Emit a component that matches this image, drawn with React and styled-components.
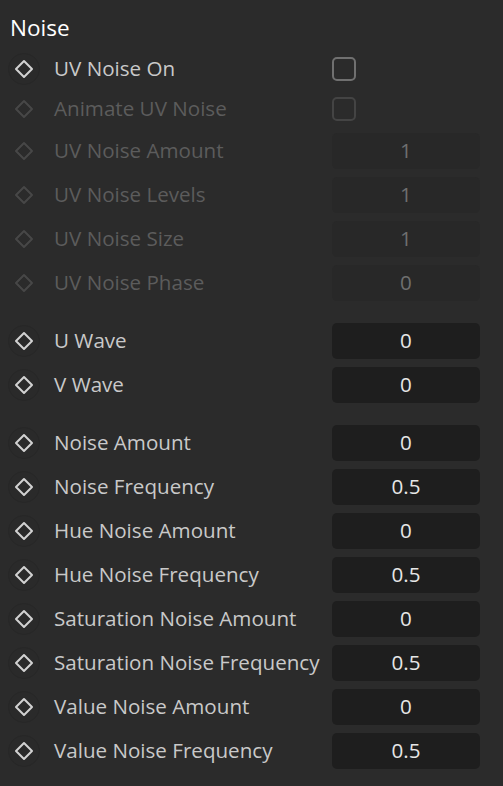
import React from "react";
import styled, { createGlobalStyle } from "styled-components";

const Global = createGlobalStyle`
  html, body { margin: 0; padding: 0; background: #2b2b2b; }
  body { font-family: "Open Sans", "Noto Sans", sans-serif; }
`;

const Panel = styled.div`
  width: 503px;
  min-height: 786px;
  background: #2b2b2b;
  box-sizing: border-box;
  padding: 0 23px 0 8px;
`;

const Title = styled.div`
  height: 49px;
  display: flex;
  align-items: center;
  padding: 6px 0 0 2px;
  box-sizing: border-box;
  color: #ffffff;
  font-size: 22.5px;
`;

const Group = styled.div`
  display: flex;
  flex-direction: column;
  & + & { margin-top: 14px; }
`;

const Row = styled.div`
  display: grid;
  grid-template-columns: 46px 1fr 148px;
  align-items: center;
  height: ${(p) => (p.$check ? 40 : 44)}px;
`;

const KeyBtn = styled.div`
  width: 32px;
  height: 32px;
  border-radius: 50%;
  display: flex;
  align-items: center;
  justify-content: center;
  box-sizing: border-box;
  border: 1px solid ${(p) => (p.$disabled ? "transparent" : "#272727")};
  background: ${(p) => (p.$disabled ? "transparent" : "#2a2a2a")};
`;

const Label = styled.div`
  color: ${(p) => (p.$disabled ? "#5c5c5c" : "#c9c9c9")};
  font-size: 20.6px;
  white-space: nowrap;
  padding-bottom: 2px;
`;

const Field = styled.div`
  height: 36px;
  border-radius: 5px;
  background: ${(p) => (p.$disabled ? "#282828" : "#1e1e1e")};
  color: ${(p) => (p.$disabled ? "#6f6f6f" : "#e6e6e6")};
  display: flex;
  align-items: center;
  justify-content: center;
  font-size: 20.6px;
  padding-bottom: 2px;
  box-sizing: border-box;
`;

const Check = styled.div`
  width: 24px;
  height: 24px;
  box-sizing: border-box;
  border-radius: 5px;
  border: 2.5px solid ${(p) => (p.$disabled ? "#444444" : "#707070")};
`;

const Diamond = ({ disabled }) => (
  <svg width="20" height="20" viewBox="0 0 20 20">
    <path
      d="M10 2 L18 10 L10 18 L2 10 Z"
      fill="none"
      stroke={disabled ? "#474747" : "#d2d2d2"}
      strokeWidth="2"
      strokeLinejoin="round"
    />
  </svg>
);

const groups = [
  [
    { label: "UV Noise On", check: true },
    { label: "Animate UV Noise", check: true, disabled: true },
    { label: "UV Noise Amount", value: "1", disabled: true },
    { label: "UV Noise Levels", value: "1", disabled: true },
    { label: "UV Noise Size", value: "1", disabled: true },
    { label: "UV Noise Phase", value: "0", disabled: true },
  ],
  [
    { label: "U Wave", value: "0" },
    { label: "V Wave", value: "0" },
  ],
  [
    { label: "Noise Amount", value: "0" },
    { label: "Noise Frequency", value: "0.5" },
    { label: "Hue Noise Amount", value: "0" },
    { label: "Hue Noise Frequency", value: "0.5" },
    { label: "Saturation Noise Amount", value: "0" },
    { label: "Saturation Noise Frequency", value: "0.5" },
    { label: "Value Noise Amount", value: "0" },
    { label: "Value Noise Frequency", value: "0.5" },
  ],
];

export default function App() {
  return (
    <>
      <Global />
      <Panel>
        <Title>Noise</Title>
        {groups.map((g, gi) => (
          <Group key={gi}>
            {g.map((r) => (
              <Row key={r.label} $check={r.check}>
                <KeyBtn $disabled={r.disabled}>
                  <Diamond disabled={r.disabled} />
                </KeyBtn>
                <Label $disabled={r.disabled}>{r.label}</Label>
                {r.check ? (
                  <Check $disabled={r.disabled} />
                ) : (
                  <Field $disabled={r.disabled}>{r.value}</Field>
                )}
              </Row>
            ))}
          </Group>
        ))}
      </Panel>
    </>
  );
}
